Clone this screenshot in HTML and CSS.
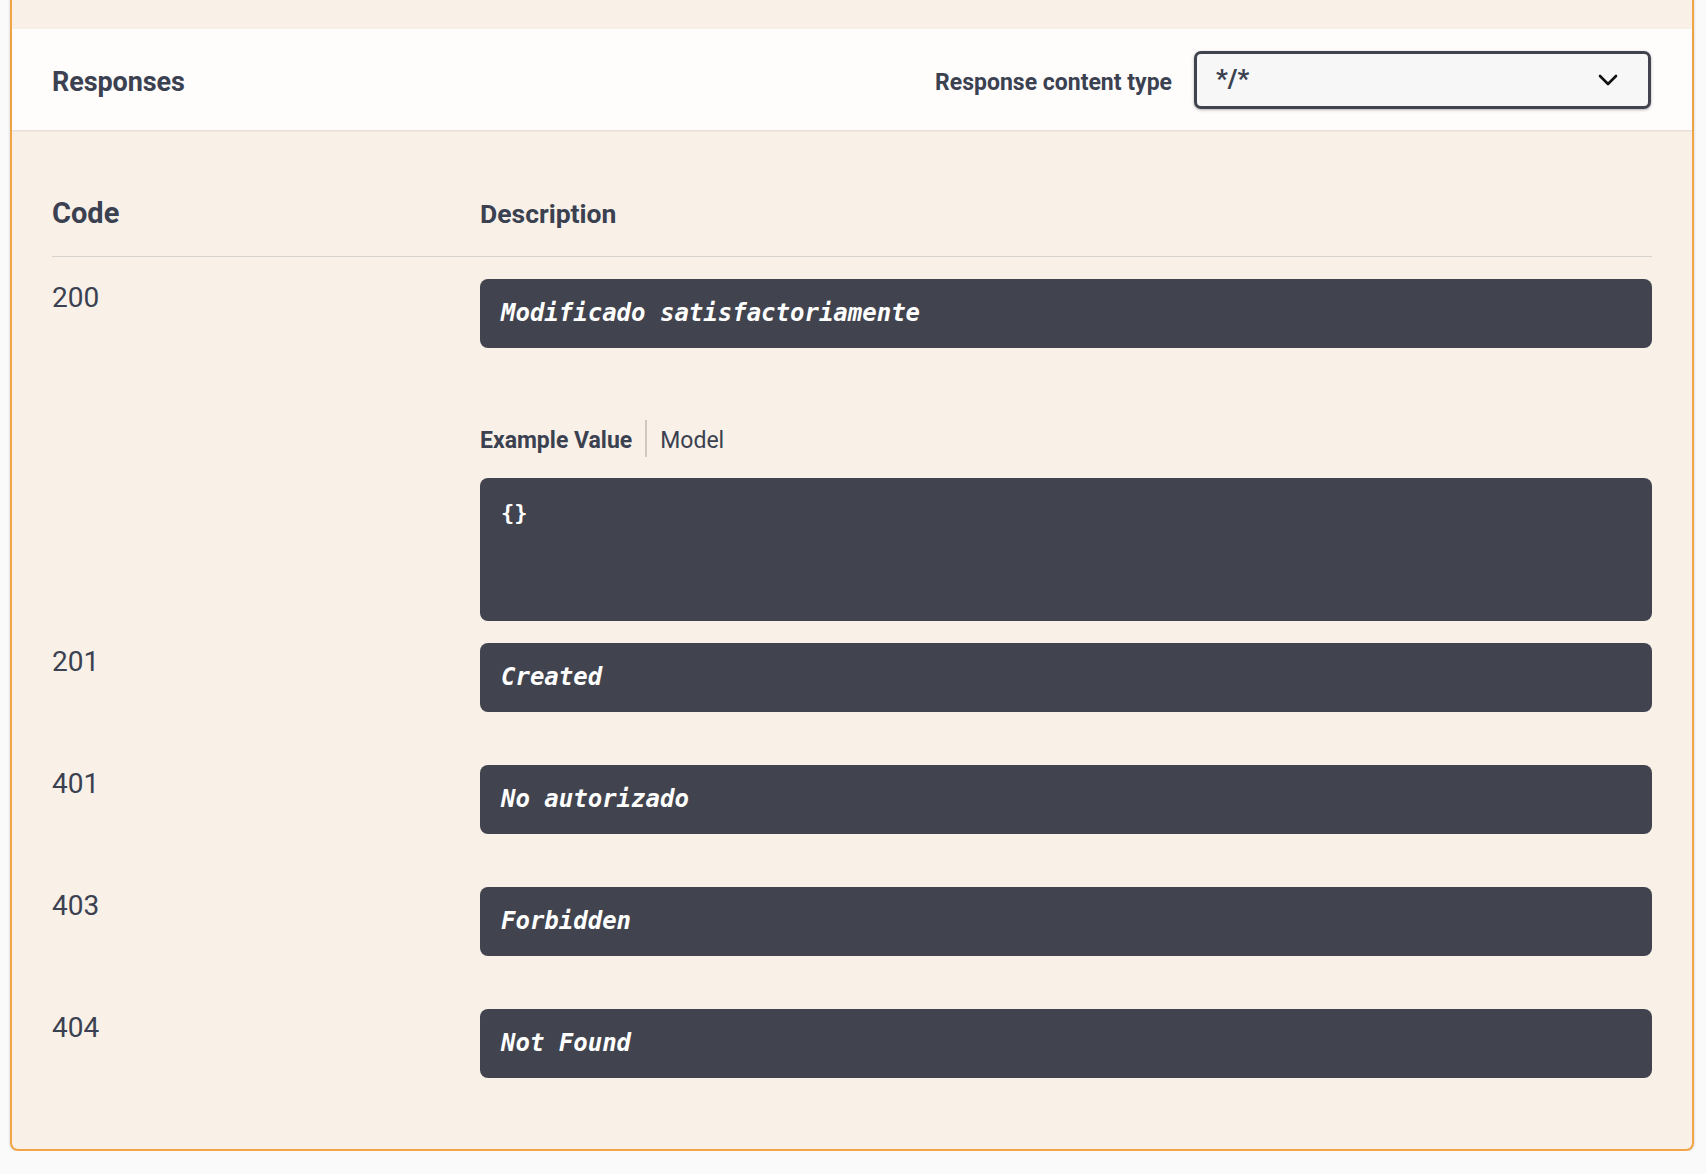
FILE: index.html
```html
<!DOCTYPE html>
<html lang="es">
<head>
<meta charset="utf-8">
<title>Responses</title>
<link rel="stylesheet" href="styles.css">
</head>
<body>
<div class="opblock">
  <div class="section-header">
    <h4 class="section-title">Responses</h4>
    <div class="content-type">
      <label class="ct-label">Response content type</label>
      <div class="select">
        <span class="select-value">*/*</span>
        <svg class="chevron" width="20" height="12" viewBox="0 0 20 12"><path d="M2 2 L10 10 L18 2" fill="none" stroke="#111" stroke-width="2.6" stroke-linecap="round" stroke-linejoin="round"/></svg>
      </div>
    </div>
  </div>
  <div class="responses-inner">
    <div class="table-head">
      <div class="col-code-head">Code</div>
      <div class="col-desc-head">Description</div>
    </div>
    <div class="resp-row">
      <div class="code">200</div>
      <div class="desc">
        <div class="markdown">Modificado satisfactoriamente</div>
        <div class="tabs">
          <span class="tab active">Example Value</span>
          <span class="tab-sep"></span>
          <span class="tab">Model</span>
        </div>
        <pre class="example">{}</pre>
      </div>
    </div>
    <div class="resp-row">
      <div class="code">201</div>
      <div class="desc"><div class="markdown spaced">Created</div></div>
    </div>
    <div class="resp-row">
      <div class="code">401</div>
      <div class="desc"><div class="markdown spaced">No autorizado</div></div>
    </div>
    <div class="resp-row">
      <div class="code">403</div>
      <div class="desc"><div class="markdown spaced">Forbidden</div></div>
    </div>
    <div class="resp-row">
      <div class="code">404</div>
      <div class="desc"><div class="markdown spaced">Not Found</div></div>
    </div>
  </div>
</div>
</body>
</html>
```
FILE: styles.css
```css
html, body {
  margin: 0;
  padding: 0;
  background: #fafafa;
}
body {
  font-family: Roboto, "Open Sans", sans-serif;
  color: #3b4151;
}
.opblock {
  margin-left: 10px;
  width: 1684px;
  box-sizing: border-box;
  padding-top: 29px;
  background: #f9f1e8;
  border: 2px solid #f1a545;
  border-top: none;
  border-radius: 0 0 8px 8px;
  box-shadow: 0 0 3px rgba(0, 0, 0, 0.19);
}
.section-header {
  height: 101px;
  box-sizing: border-box;
  padding: 5px 41px 0 40px;
  display: flex;
  align-items: center;
  justify-content: space-between;
  background: rgba(255, 255, 255, 0.85);
  box-shadow: 0 1px 2px rgba(0, 0, 0, 0.1);
}
.section-title {
  margin: 0;
  font-size: 27px;
  font-weight: 700;
  letter-spacing: -0.1px;
}
.content-type {
  display: flex;
  align-items: center;
  gap: 22px;
}
.ct-label {
  font-size: 23px;
  font-weight: 700;
}
.select {
  width: 457px;
  height: 58px;
  margin-top: -5px;
  box-sizing: border-box;
  border: 3px solid #41444e;
  border-radius: 7px;
  background: #f7f7f7;
  box-shadow: 0 1px 3px rgba(0, 0, 0, 0.3);
  display: flex;
  align-items: center;
  justify-content: space-between;
  padding: 0 30px 0 19px;
}
.select-value {
  font-size: 26px;
  font-weight: 700;
  margin-top: -2px;
}
.chevron {
  display: block;
}
.responses-inner {
  padding: 40px 40px 40px 40px;
}
.table-head {
  display: grid;
  grid-template-columns: 428px 1fr;
  align-items: center;
  padding: 24px 0;
  height: 38px;
  border-bottom: 1px solid #d6d3cf;
}
.col-code-head {
  font-size: 29px;
  font-weight: 700;
}
.col-desc-head {
  font-size: 26.5px;
  font-weight: 700;
}
.resp-row {
  display: grid;
  grid-template-columns: 428px 1fr;
  padding-top: 22px;
}
.code {
  font-size: 28px;
  line-height: 38px;
}
.markdown {
  background: #41444e;
  color: #fff;
  border-radius: 8px;
  padding: 20px 21px;
  font-family: "DejaVu Sans Mono", "Liberation Mono", monospace;
  font-style: italic;
  font-weight: 700;
  font-size: 24px;
  line-height: 29px;
}
.markdown.spaced {
  margin-bottom: 31px;
}
.tabs {
  display: flex;
  align-items: center;
  height: 37px;
  margin-top: 72px;
  margin-bottom: 21px;
}
.tab {
  font-size: 23px;
  color: #3b4151;
  margin-top: 3px;
}
.tab.active {
  font-weight: 700;
}
.tab-sep {
  width: 2px;
  height: 37px;
  background: #cfc8bf;
  margin: 0 13px;
}
.example {
  margin: 0;
  height: 143px;
  box-sizing: border-box;
  background: #41444e;
  color: #fff;
  border-radius: 8px;
  padding: 20px 21px;
  font-family: "DejaVu Sans Mono", "Liberation Mono", monospace;
  font-weight: 700;
  font-size: 22px;
  line-height: 29px;
}
```
